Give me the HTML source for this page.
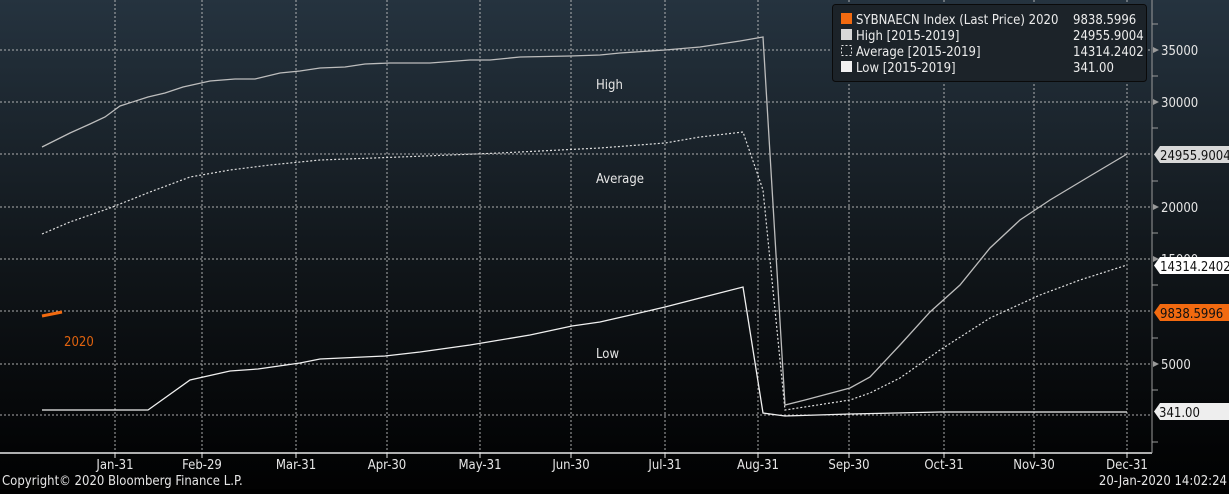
<!DOCTYPE html>
<html><head><meta charset="utf-8"><style>
html,body{margin:0;padding:0;background:#000;}
body{width:1229px;height:489px;overflow:hidden;}
svg text{font-family:"DejaVu Sans Condensed","DejaVu Sans","Liberation Sans",sans-serif;}
</style></head><body>
<svg width="1229" height="489" viewBox="0 0 1229 489" xmlns="http://www.w3.org/2000/svg">
<defs><linearGradient id="bg" x1="0" y1="0" x2="0" y2="1">
<stop offset="0" stop-color="#25333f"/><stop offset="0.55" stop-color="#101519"/><stop offset="0.92" stop-color="#030405"/><stop offset="1" stop-color="#020202"/></linearGradient></defs>
<rect x="0" y="0" width="1229" height="489" fill="url(#bg)"/>
<g stroke="#c8c8c8" stroke-width="1" stroke-dasharray="2,2" opacity="0.85">
<line x1="0" y1="50" x2="1151" y2="50"/><line x1="0" y1="102" x2="1151" y2="102"/>
<line x1="0" y1="154" x2="1151" y2="154"/><line x1="0" y1="207" x2="1151" y2="207"/>
<line x1="0" y1="259" x2="1151" y2="259"/><line x1="0" y1="311" x2="1151" y2="311"/>
<line x1="0" y1="364" x2="1151" y2="364"/><line x1="0" y1="415" x2="1151" y2="415"/>
<line x1="115" y1="0" x2="115" y2="453"/><line x1="202" y1="0" x2="202" y2="453"/>
<line x1="296" y1="0" x2="296" y2="453"/><line x1="387" y1="0" x2="387" y2="453"/>
<line x1="480" y1="0" x2="480" y2="453"/><line x1="571" y1="0" x2="571" y2="453"/>
<line x1="665" y1="0" x2="665" y2="453"/><line x1="758" y1="0" x2="758" y2="453"/>
<line x1="849" y1="0" x2="849" y2="453"/><line x1="944" y1="0" x2="944" y2="453"/>
<line x1="1034" y1="0" x2="1034" y2="453"/><line x1="1127" y1="0" x2="1127" y2="453"/>
</g>
<line x1="0" y1="453" x2="1152" y2="453" stroke="#e8e8e8" stroke-width="1.5"/>
<line x1="1152" y1="0" x2="1152" y2="453" stroke="#9a9a9a" stroke-width="1"/>
<g stroke="#e8e8e8"><line x1="115" y1="453" x2="115" y2="458"/><line x1="202" y1="453" x2="202" y2="458"/><line x1="296" y1="453" x2="296" y2="458"/><line x1="387" y1="453" x2="387" y2="458"/><line x1="480" y1="453" x2="480" y2="458"/><line x1="571" y1="453" x2="571" y2="458"/><line x1="665" y1="453" x2="665" y2="458"/><line x1="758" y1="453" x2="758" y2="458"/><line x1="849" y1="453" x2="849" y2="458"/><line x1="944" y1="453" x2="944" y2="458"/><line x1="1034" y1="453" x2="1034" y2="458"/><line x1="1127" y1="453" x2="1127" y2="458"/></g>
<g stroke="#9a9a9a"><line x1="1152" y1="24" x2="1158" y2="24"/><line x1="1152" y1="76" x2="1158" y2="76"/><line x1="1152" y1="128" x2="1158" y2="128"/><line x1="1152" y1="181" x2="1158" y2="181"/><line x1="1152" y1="233" x2="1158" y2="233"/><line x1="1152" y1="285" x2="1158" y2="285"/><line x1="1152" y1="338" x2="1158" y2="338"/><line x1="1152" y1="390" x2="1158" y2="390"/><line x1="1152" y1="442" x2="1158" y2="442"/></g>
<g fill="#9a9a9a"><path d="M1153 47l6 3-6 3z"/><path d="M1153 99l6 3-6 3z"/><path d="M1153 204l6 3-6 3z"/><path d="M1153 256l6 3-6 3z"/><path d="M1153 361l6 3-6 3z"/></g>
<g fill="#e6e6e6" font-size="13"><text x="1161" y="55">35000</text><text x="1161" y="107">30000</text><text x="1161" y="212">20000</text><text x="1161" y="264">15000</text><text x="1161" y="369">5000</text></g>
<polyline fill="none" stroke="#bdbdbd" stroke-width="1.3" points="42,147 70,133 90,124 105,117 120,106 148,97 165,93 183,87 210,81 235,79 255,79 280,73 300,71 320,68 345,67 365,64 390,63 430,63 470,60 490,60 520,57 570,56 600,55 620,53 665,50 700,47 740,41 763,37 785,405 805,400 850,388 870,377 900,345 930,312 960,285 990,248 1020,220 1050,200 1090,176 1127,154"/>
<polyline fill="none" stroke="#e0e0e0" stroke-width="1.2" stroke-dasharray="2,2" points="42,234 70,222 110,208 150,192 190,177 230,170 270,165 320,160 400,157 500,153 600,148 665,143 700,137 743,132 763,190 785,410 850,400 870,393 900,378 940,350 990,318 1040,295 1080,280 1127,265"/>
<polyline fill="none" stroke="#f0f0f0" stroke-width="1.3" points="42,410 148,410 190,380 230,371 258,369 300,363 320,359 385,356 420,352 470,345 530,335 572,326 600,322 635,314 665,307 700,298 743,287 763,413 785,416 850,414 940,412 1127,412"/>
<line x1="42" y1="316" x2="62" y2="312" stroke="#f26a10" stroke-width="3"/>
<g font-size="13"><text x="64" y="346" fill="#e0630f">2020</text>
<text x="596" y="89" fill="#e6e6e6">High</text><text x="596" y="183" fill="#e6e6e6">Average</text><text x="596" y="358" fill="#e6e6e6">Low</text></g>
<rect x="832.5" y="4.5" width="314" height="77" rx="3" fill="#1c2329" stroke="#0a0a0a"/>
<rect x="841" y="13" width="11" height="11" fill="#f26a10"/>
<rect x="841" y="29" width="11" height="11" fill="#d8d8d8"/>
<rect x="841.5" y="45.5" width="10" height="10" fill="none" stroke="#e6e6e6" stroke-dasharray="2,2"/>
<rect x="841" y="61" width="11" height="11" fill="#f2f2f2"/>
<g fill="#ececec" font-size="13"><text x="856" y="24">SYBNAECN Index (Last Price) 2020</text><text x="1073" y="24">9838.5996</text>
<text x="856" y="40">High [2015-2019]</text><text x="1073" y="40">24955.9004</text>
<text x="856" y="56">Average [2015-2019]</text><text x="1073" y="56">14314.2402</text>
<text x="856" y="72">Low [2015-2019]</text><text x="1073" y="72">341.00</text></g>
<path d="M1160 146h69v17h-69l-6-8.5z" fill="#d8d8d8"/><text x="1160" y="160" font-size="13" fill="#111">24955.9004</text>
<path d="M1160 257h69v17h-69l-6-8.5z" fill="#ffffff"/><text x="1160" y="271" font-size="13" fill="#111">14314.2402</text>
<path d="M1160 304h69v17h-69l-6-8.5z" fill="#f26a10"/><text x="1160" y="318" font-size="13" fill="#111">9838.5996</text>
<path d="M1160 403h69v17h-69l-6-8.5z" fill="#eeeeee"/><text x="1159" y="417" font-size="13" fill="#111">341.00</text>
<g fill="#e6e6e6" font-size="13" text-anchor="middle"><text x="115" y="469">Jan-31</text><text x="202" y="469">Feb-29</text><text x="296" y="469">Mar-31</text><text x="387" y="469">Apr-30</text><text x="480" y="469">May-31</text><text x="571" y="469">Jun-30</text><text x="665" y="469">Jul-31</text><text x="758" y="469">Aug-31</text><text x="849" y="469">Sep-30</text><text x="944" y="469">Oct-31</text><text x="1034" y="469">Nov-30</text><text x="1127" y="469">Dec-31</text></g>
<text x="2" y="485" font-size="13" fill="#e6e6e6">Copyright© 2020 Bloomberg Finance L.P.</text>
<text x="1227" y="485" font-size="13" fill="#e6e6e6" text-anchor="end">20-Jan-2020 14:02:24</text>
</svg>
</body></html>
